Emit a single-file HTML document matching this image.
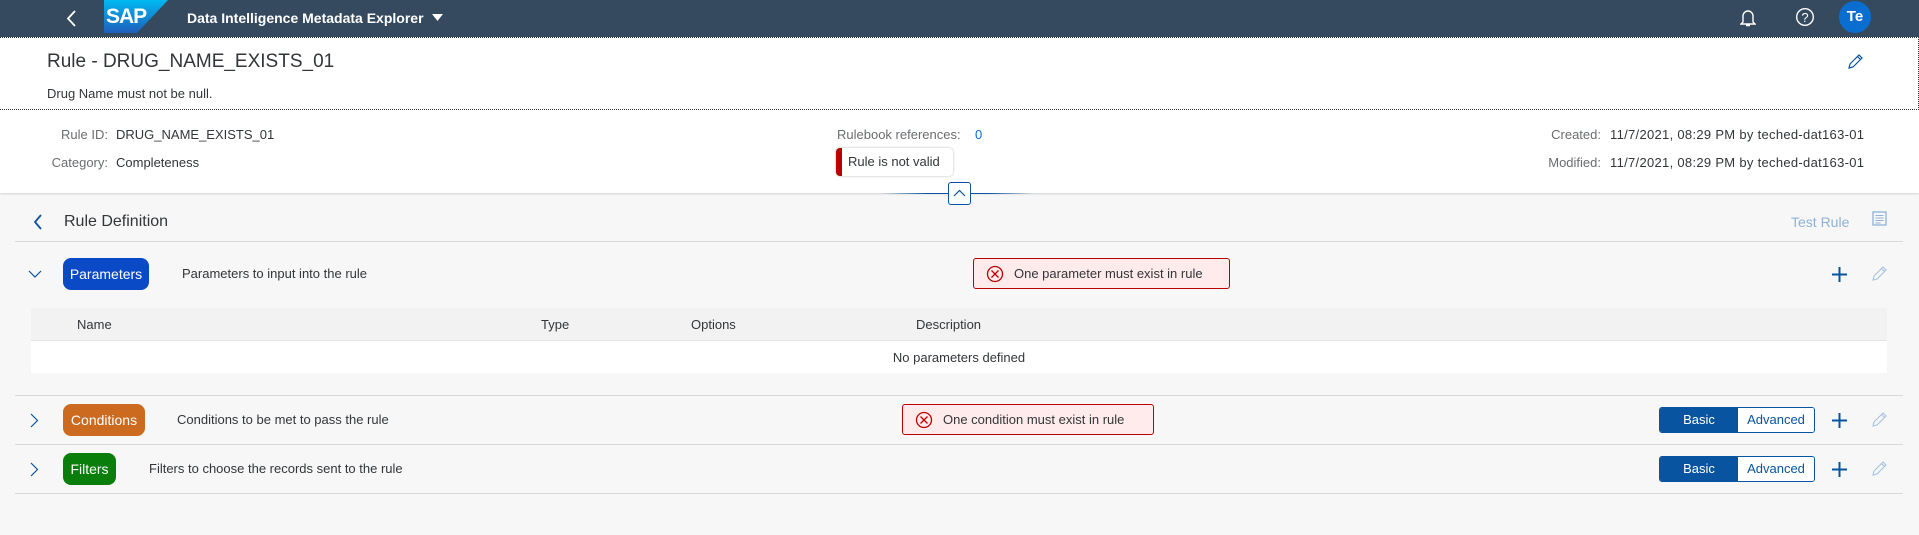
<!DOCTYPE html>
<html><head><meta charset="utf-8"><style>
*{box-sizing:border-box;margin:0;padding:0}
body{width:1919px;height:535px;background:#f7f7f7;font-family:"Liberation Sans",Arial,sans-serif;color:#32363a;position:relative;overflow:hidden;font-size:13px}
.a{position:absolute;white-space:nowrap}
.hdr{left:0;top:0;width:1919px;height:37px;background:#354a5f}
.top{left:0;top:37px;width:1919px;height:73px;background:#fff;border-top:1px dotted #333;border-bottom:1px dotted #333;border-right:1px dotted #333}
.info{left:0;top:110px;width:1919px;height:83px;background:#fff;box-shadow:0 1px 2px rgba(0,0,0,.15)}
.lbl{color:#6a6d70;text-align:right}
.line{height:1px;background:#d9d9d9;left:15px;width:1888px}
.pill{height:32px;border-radius:8px;color:#fff;font-size:14px;line-height:32px;text-align:center}
.err{background:#ffebeb;border:1px solid #bb0000;border-radius:3px;height:31px;line-height:29px;font-size:13px;padding-left:40px}
.err svg{position:absolute;left:12px;top:6px}
.seg{height:26px;width:156px;border:1px solid #0854a0;border-radius:3px;overflow:hidden;font-size:13px;display:flex}
.seg div{line-height:24px;text-align:center}
</style></head><body>
<div class="a hdr"></div>
<svg class="a" style="left:66px;top:10px" width="12" height="17"><path d="M9 1L2 8.5L9 16" stroke="#fff" stroke-width="1.8" fill="none"/></svg>
<svg class="a" style="left:104px;top:0" width="64" height="33"><defs><linearGradient id="g" x1="0" y1="0" x2="0" y2="1"><stop offset="0" stop-color="#00b8f1"/><stop offset="1" stop-color="#1e5fbb"/></linearGradient></defs><polygon points="0,0 64,0 33,33 0,33" fill="url(#g)"/><text x="2" y="23" font-family="Liberation Sans" font-weight="bold" font-size="21" fill="#fff" letter-spacing="-1">SAP</text></svg>
<div class="a" style="left:187px;top:10px;color:#fff;font-weight:bold;font-size:14px">Data Intelligence Metadata Explorer</div>
<svg class="a" style="left:432px;top:14px" width="11" height="8"><path d="M0 0H11L5.5 7Z" fill="#fff"/></svg>
<svg class="a" style="left:1740px;top:8px" width="16" height="20"><path d="M3 14V8a5 5 0 0110 0v6l2 2H1z M6 17.5h4" stroke="#fff" stroke-width="1.4" fill="none"/></svg>
<svg class="a" style="left:1795px;top:7px" width="20" height="20"><circle cx="10" cy="10" r="8.3" stroke="#fff" stroke-width="1.4" fill="none"/><text x="10" y="15" text-anchor="middle" font-size="13" fill="#fff" font-family="Liberation Sans">?</text></svg>
<div class="a" style="left:1839px;top:1px;width:32px;height:32px;border-radius:50%;background:#0a6ed1;color:#fff;font-size:15px;font-weight:bold;line-height:32px;text-align:center">Te</div>

<div class="a top"></div>
<div class="a" style="left:47px;top:51px;font-size:19px">Rule - DRUG_NAME_EXISTS_01</div>
<div class="a" style="left:47px;top:86px;font-size:13px">Drug Name must not be null.</div>
<svg class="a" style="left:1848px;top:54px" width="15" height="15"><path d="M1 14l1-4 9-9 3 3-9 9z M9.5 2.5l3 3" stroke="#0854a0" stroke-width="1.2" fill="none"/></svg>

<div class="a info"></div>
<div class="a lbl" style="left:0;width:108px;top:127px">Rule ID:</div>
<div class="a" style="left:116px;top:127px">DRUG_NAME_EXISTS_01</div>
<div class="a lbl" style="left:0;width:108px;top:155px">Category:</div>
<div class="a" style="left:116px;top:155px">Completeness</div>
<div class="a lbl" style="left:837px;top:127px">Rulebook references:</div>
<div class="a" style="left:975px;top:127px;color:#0a6ed1">0</div>
<div class="a" style="left:836px;top:148px;width:117px;height:28px;background:#fff;border-radius:4px;box-shadow:0 0 2px rgba(0,0,0,.3);border-left:6px solid #bb0000;padding-left:6px;line-height:27px">Rule is not valid</div>
<div class="a lbl" style="left:1500px;width:101px;top:127px">Created:</div>
<div class="a" style="left:1610px;top:127px;letter-spacing:0.3px">11/7/2021, 08:29 PM by teched-dat163-01</div>
<div class="a lbl" style="left:1500px;width:101px;top:155px">Modified:</div>
<div class="a" style="left:1610px;top:155px;letter-spacing:0.3px">11/7/2021, 08:29 PM by teched-dat163-01</div>
<div class="a" style="left:881px;top:193px;width:153px;height:1px;background:linear-gradient(90deg,rgba(8,84,160,0),#0854a0 30%,#0854a0 70%,rgba(8,84,160,0))"></div>
<div class="a" style="left:948px;top:182px;width:23px;height:23px;background:#fff;border:1px solid #0854a0;border-radius:3px"></div>
<svg class="a" style="left:953px;top:189px" width="13" height="8"><path d="M1 7L6.5 1.5L12 7" stroke="#0854a0" stroke-width="1.2" fill="none"/></svg>

<svg class="a" style="left:33px;top:214px" width="10" height="16"><path d="M8 1L2 8L8 15" stroke="#0854a0" stroke-width="1.8" fill="none"/></svg>
<div class="a" style="left:64px;top:213px;font-size:16px">Rule Definition</div>
<div class="a" style="left:1791px;top:214px;color:#8fb1d8;font-size:14px">Test Rule</div>
<svg class="a" style="left:1872px;top:211px" width="15" height="15"><rect x="1" y="1" width="13" height="13" fill="none" stroke="#8fb1d8" stroke-width="1.3"/><path d="M3.5 4.5h8M3.5 7h8M3.5 9.5h8M3.5 12h5" stroke="#8fb1d8"/></svg>
<div class="a line" style="top:241px"></div>

<svg class="a" style="left:28px;top:270px" width="14" height="9"><path d="M1 1L7 7L13 1" stroke="#0854a0" stroke-width="1.2" fill="none"/></svg>
<div class="a pill" style="left:63px;top:258px;width:86px;background:#0b4ac6">Parameters</div>
<div class="a" style="left:182px;top:266px">Parameters to input into the rule</div>
<div class="a err" style="left:973px;top:258px;width:257px"><svg width="18" height="18"><circle cx="9" cy="9" r="7.5" stroke="#bb0000" stroke-width="1.3" fill="none"/><path d="M5.5 5.5l7 7M12.5 5.5l-7 7" stroke="#bb0000" stroke-width="1.3"/></svg>One parameter must exist in rule</div>
<svg class="a" style="left:1832px;top:267px" width="15" height="15"><path d="M7.5 0v15M0 7.5h15" stroke="#0854a0" stroke-width="2"/></svg>
<svg class="a" style="left:1872px;top:266px" width="15" height="15"><path d="M1 14l1-4 9-9 3 3-9 9z M9.5 2.5l3 3" stroke="#a6c2e3" stroke-width="1.1" fill="none"/></svg>

<div class="a" style="left:31px;top:308px;width:1856px;height:33px;background:#f2f2f2;border-bottom:1px solid #e5e5e5"></div>
<div class="a" style="left:31px;top:341px;width:1856px;height:32px;background:#fff"></div>
<div class="a" style="left:77px;top:317px;color:#32363a">Name</div>
<div class="a" style="left:541px;top:317px">Type</div>
<div class="a" style="left:691px;top:317px">Options</div>
<div class="a" style="left:916px;top:317px">Description</div>
<div class="a" style="left:31px;width:1856px;text-align:center;top:350px">No parameters defined</div>
<div class="a line" style="top:395px"></div>

<svg class="a" style="left:30px;top:413px" width="9" height="15"><path d="M1 1L7.5 7.5L1 14" stroke="#0854a0" stroke-width="1.2" fill="none"/></svg>
<div class="a pill" style="left:63px;top:404px;width:82px;background:#cc6a20">Conditions</div>
<div class="a" style="left:177px;top:412px">Conditions to be met to pass the rule</div>
<div class="a err" style="left:902px;top:404px;width:252px"><svg width="18" height="18"><circle cx="9" cy="9" r="7.5" stroke="#bb0000" stroke-width="1.3" fill="none"/><path d="M5.5 5.5l7 7M12.5 5.5l-7 7" stroke="#bb0000" stroke-width="1.3"/></svg>One condition must exist in rule</div>
<div class="a seg" style="left:1659px;top:407px"><div style="width:78px;background:#0854a0;color:#fff">Basic</div><div style="flex:1;background:#fff;color:#0854a0">Advanced</div></div>
<svg class="a" style="left:1832px;top:413px" width="15" height="15"><path d="M7.5 0v15M0 7.5h15" stroke="#0854a0" stroke-width="2"/></svg>
<svg class="a" style="left:1872px;top:412px" width="15" height="15"><path d="M1 14l1-4 9-9 3 3-9 9z M9.5 2.5l3 3" stroke="#a6c2e3" stroke-width="1.1" fill="none"/></svg>
<div class="a line" style="top:444px"></div>

<svg class="a" style="left:30px;top:462px" width="9" height="15"><path d="M1 1L7.5 7.5L1 14" stroke="#0854a0" stroke-width="1.2" fill="none"/></svg>
<div class="a pill" style="left:63px;top:453px;width:53px;background:#0a7e0a">Filters</div>
<div class="a" style="left:149px;top:461px">Filters to choose the records sent to the rule</div>
<div class="a seg" style="left:1659px;top:456px"><div style="width:78px;background:#0854a0;color:#fff">Basic</div><div style="flex:1;background:#fff;color:#0854a0">Advanced</div></div>
<svg class="a" style="left:1832px;top:462px" width="15" height="15"><path d="M7.5 0v15M0 7.5h15" stroke="#0854a0" stroke-width="2"/></svg>
<svg class="a" style="left:1872px;top:461px" width="15" height="15"><path d="M1 14l1-4 9-9 3 3-9 9z M9.5 2.5l3 3" stroke="#a6c2e3" stroke-width="1.1" fill="none"/></svg>
<div class="a line" style="top:493px"></div>
</body></html>
